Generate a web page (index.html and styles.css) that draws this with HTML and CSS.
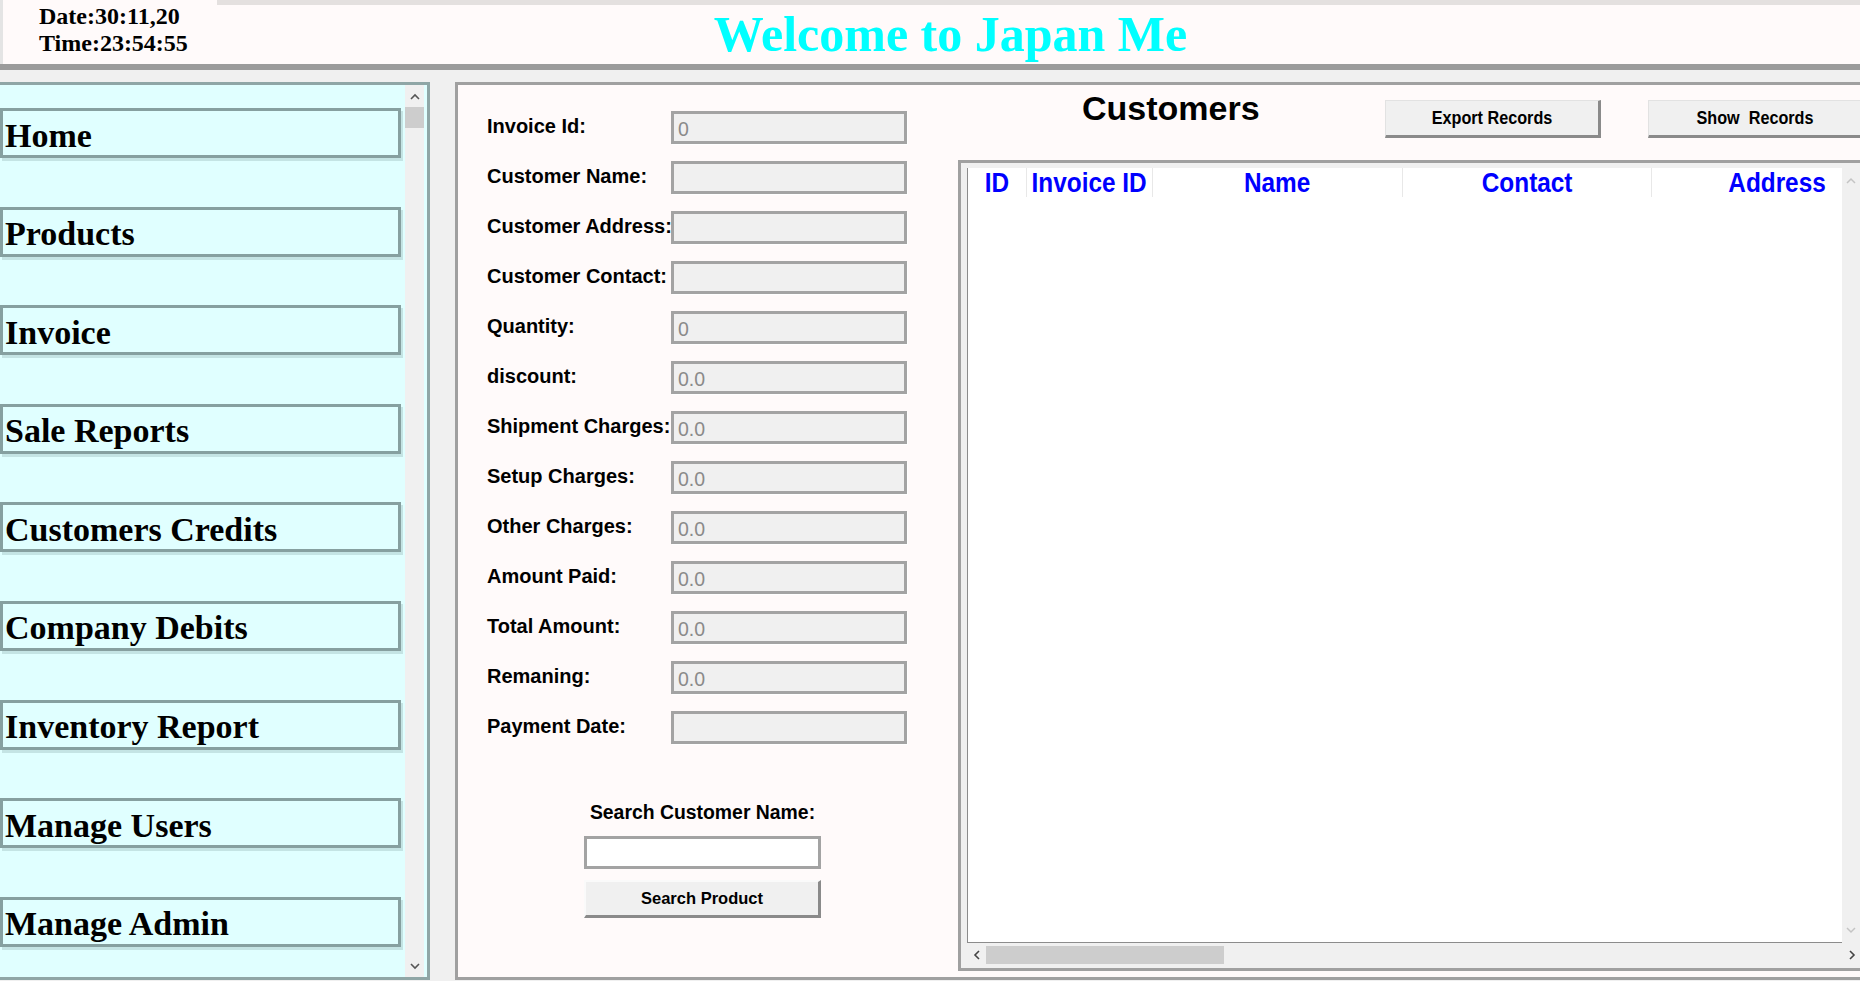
FILE: index.html
```html
<!DOCTYPE html>
<html>
<head>
<meta charset="utf-8">
<title>Japan Me - Customers</title>
<link rel="stylesheet" href="styles.css">
</head>
<body>
<header class="header">
  <div class="clock">
    <div>Date:30:11,20</div>
    <div>Time:23:54:55</div>
  </div>
  <div class="banner">Welcome to Japan Me</div>
</header>
<div class="workspace">
  <nav class="sidebar">
    <div class="navlist">
      <div class="navbtn">Home</div>
      <div class="navbtn">Products</div>
      <div class="navbtn">Invoice</div>
      <div class="navbtn">Sale Reports</div>
      <div class="navbtn">Customers Credits</div>
      <div class="navbtn">Company Debits</div>
      <div class="navbtn">Inventory Report</div>
      <div class="navbtn">Manage Users</div>
      <div class="navbtn">Manage Admin</div>
    </div>
    <div class="sscroll">
      <div class="sarrow"><svg width="10" height="7" viewBox="0 0 10 7"><polyline points="1,6 5,2 9,6" fill="none" stroke="#555" stroke-width="1.6"/></svg></div>
      <div class="sthumb"></div>
      <div class="strack"></div>
      <div class="sarrow"><svg width="10" height="7" viewBox="0 0 10 7"><polyline points="1,1 5,5 9,1" fill="none" stroke="#555" stroke-width="1.6"/></svg></div>
    </div>
  </nav>
  <main class="main">
    <section class="form">
      <div class="row"><label>Invoice Id:</label><input type="text" value="0" readonly></div>
      <div class="row"><label>Customer Name:</label><input type="text" value="" readonly></div>
      <div class="row"><label>Customer Address:</label><input type="text" value="" readonly></div>
      <div class="row"><label>Customer Contact:</label><input type="text" value="" readonly></div>
      <div class="row"><label>Quantity:</label><input type="text" value="0" readonly></div>
      <div class="row"><label>discount:</label><input type="text" value="0.0" readonly></div>
      <div class="row"><label>Shipment Charges:</label><input type="text" value="0.0" readonly></div>
      <div class="row"><label>Setup Charges:</label><input type="text" value="0.0" readonly></div>
      <div class="row"><label>Other Charges:</label><input type="text" value="0.0" readonly></div>
      <div class="row"><label>Amount Paid:</label><input type="text" value="0.0" readonly></div>
      <div class="row"><label>Total Amount:</label><input type="text" value="0.0" readonly></div>
      <div class="row"><label>Remaning:</label><input type="text" value="0.0" readonly></div>
      <div class="row"><label>Payment Date:</label><input type="text" value="" readonly></div>
      <div class="search">
        <div class="search-label">Search Customer Name:</div>
        <input class="search-input" type="text" value="">
        <div class="search-btn">Search Product</div>
      </div>
    </section>
    <section class="records">
      <div class="toolbar">
        <div class="records-title">Customers</div>
        <div class="btn btn-export"><span>Export Records</span></div>
        <div class="btn btn-show"><span>Show&nbsp; Records</span></div>
      </div>
      <div class="tablebox">
        <div class="viewport">
          <div class="thead">
            <div class="th c-id"><span>ID</span></div>
            <div class="th c-inv"><span>Invoice ID</span></div>
            <div class="th c-name"><span>Name</span></div>
            <div class="th c-contact"><span>Contact</span></div>
            <div class="th c-addr"><span>Address</span></div>
          </div>
          <div class="tbody"></div>
        </div>
        <div class="vscroll">
          <svg width="10" height="7" viewBox="0 0 10 7"><polyline points="1,6 5,2 9,6" fill="none" stroke="#c4c4c4" stroke-width="1.5"/></svg>
          <svg width="10" height="7" viewBox="0 0 10 7"><polyline points="1,1 5,5 9,1" fill="none" stroke="#c4c4c4" stroke-width="1.5"/></svg>
        </div>
        <div class="hscroll">
          <svg class="harrow" width="7" height="10" viewBox="0 0 7 10"><polyline points="6,1 2,5 6,9" fill="none" stroke="#444" stroke-width="1.6"/></svg>
          <div class="hthumb"></div>
          <div class="hspace"></div>
          <svg class="harrow" width="7" height="10" viewBox="0 0 7 10"><polyline points="1,1 5,5 1,9" fill="none" stroke="#444" stroke-width="1.6"/></svg>
        </div>
      </div>
    </section>
  </main>
</div>
</body>
</html>
```
FILE: styles.css
```css
* { box-sizing: border-box; }
html, body { margin: 0; padding: 0; }
body {
  width: 1860px;
  height: 981px;
  overflow: hidden;
  background: #f0f0f0;
  font-family: "Liberation Sans", Arial, sans-serif;
  color: #000;
}

/* ---------- header ---------- */
.header {
  display: flex;
  height: 70px;
  background: #fffafa;
  border-bottom: 6px solid #9b9b9b;
}
.clock {
  width: 217px;
  border-left: 3px solid #e4e4e4;
  padding: 3px 0 0 36px;
  font-family: "Liberation Serif", "Times New Roman", serif;
  font-weight: bold;
  font-size: 24px;
  line-height: 27px;
}
.banner {
  flex: 1;
  border-top: 5px solid #e4e0df;
  padding-right: 176px;
  text-align: center;
  font-family: "Liberation Serif", "Times New Roman", serif;
  font-weight: bold;
  font-size: 50px;
  line-height: 59px;
  color: #00ffff;
}

/* ---------- workspace ---------- */
.workspace {
  display: flex;
  align-items: flex-start;
  padding-top: 12px;
}

/* sidebar */
.sidebar {
  width: 430px;
  height: 898px;
  display: flex;
  background: #e0ffff;
  border: 3px solid #8fa6a6;
  border-left: 0;
}
.navlist {
  width: 405px;
  padding-top: 23px;
  display: flex;
  flex-direction: column;
  gap: 48.6px;
}
.navbtn {
  width: 401px;
  height: 50px;
  display: flex;
  align-items: center;
  padding: 5px 0 0 2px;
  border: 3px solid #86a0a0;
  box-shadow: 2px 3px 0 #c4e4e4;
  font-family: "Liberation Serif", "Times New Roman", serif;
  font-weight: bold;
  font-size: 34px;
  white-space: nowrap;
}
.sscroll {
  width: 19px;
  display: flex;
  flex-direction: column;
  background: #f0f0f0;
}
.sarrow {
  height: 22px;
  display: flex;
  align-items: center;
  justify-content: center;
}
.sthumb {
  height: 21px;
  background: #cdcdcd;
}
.strack { flex: 1; }

/* main panel */
.main {
  margin-left: 25px;
  width: 1405px;
  height: 898px;
  display: flex;
  overflow: hidden;
  background: #fffafa;
  border: 3px solid #a0a0a0;
  border-right: 0;
}

/* form */
.form {
  width: 500px;
  flex: none;
  padding: 26px 0 0 29px;
}
.row {
  display: flex;
  align-items: flex-start;
  height: 33px;
  margin-bottom: 17px;
}
.row label {
  width: 184px;
  flex: none;
  font-weight: bold;
  font-size: 20px;
  line-height: 30px;
  white-space: nowrap;
}
.row input {
  width: 236px;
  height: 33px;
  margin: 0;
  padding: 3px 0 0 4px;
  border: 3px solid #a3a3a3;
  border-radius: 0;
  background: #f0f0f0;
  box-shadow: 1px 1px 0 #ffffff;
  font-family: "Liberation Sans", Arial, sans-serif;
  font-size: 19.5px;
  color: #8a8a8a;
  outline: none;
}
.search {
  width: 237px;
  margin: 56px 0 0 97px;
  display: flex;
  flex-direction: column;
  align-items: center;
}
.search-label {
  font-weight: bold;
  font-size: 19.4px;
  line-height: 24px;
  white-space: nowrap;
}
.search-input {
  margin: 12px 0 0;
  width: 237px;
  height: 33px;
  padding: 0 4px;
  border: 3px solid #a3a3a3;
  border-radius: 0;
  background: #fff;
  outline: none;
  font-family: "Liberation Sans", Arial, sans-serif;
  font-size: 18px;
}
.search-btn {
  margin-top: 11px;
  width: 237px;
  height: 38px;
  display: flex;
  align-items: center;
  justify-content: center;
  background: #f0f0f0;
  border-top: 2px solid #fafafa;
  border-left: 2px solid #fafafa;
  border-right: 3px solid #8a8a8a;
  border-bottom: 3px solid #8a8a8a;
  font-weight: bold;
  font-size: 16.5px;
}

/* records */
.records {
  flex: 1;
  display: flex;
  flex-direction: column;
}
.toolbar {
  height: 75px;
  display: flex;
  align-items: flex-start;
}
.records-title {
  margin: 6px 0 0 124px;
  font-weight: bold;
  font-size: 34px;
  line-height: 34px;
  white-space: nowrap;
}
.btn {
  flex: none;
  margin-top: 15px;
  width: 216px;
  height: 38px;
  display: flex;
  align-items: center;
  justify-content: center;
  background: #f0f0f0;
  border-top: 1px solid #e2e2e2;
  border-left: 1px solid #e2e2e2;
  border-right: 3px solid #8a8a8a;
  border-bottom: 3px solid #8a8a8a;
  font-weight: bold;
  font-size: 18px;
  white-space: nowrap;
}
.btn span {
  display: inline-block;
  transform: scaleX(0.9);
}
.btn-export { margin-left: 125px; }
.btn-show { margin-left: 47px; }

/* table */
.tablebox {
  width: 902px;
  height: 811px;
  display: grid;
  grid-template-columns: 875px 18px;
  grid-template-rows: 1fr 24px;
  padding: 5px 0 1px 6px;
  background: #f0f0f0;
  border-top: 3px solid #a0a0a0;
  border-left: 3px solid #a0a0a0;
  border-bottom: 3px solid #a0a0a0;
}
.viewport {
  background: #fff;
  border-left: 1px solid #8c8c8c;
  border-bottom: 1px solid #8c8c8c;
  overflow: hidden;
  display: flex;
  flex-direction: column;
}
.thead {
  display: flex;
  height: 29px;
  flex: none;
}
.th {
  flex: none;
  height: 29px;
  display: flex;
  align-items: center;
  justify-content: center;
  border-right: 1px solid #e8e8e8;
  color: #0000ff;
  font-weight: bold;
  font-size: 28px;
  white-space: nowrap;
}
.th span {
  display: inline-block;
  transform: scaleX(0.87);
}
.c-id { width: 59px; }
.c-inv { width: 126px; }
.c-name { width: 250px; }
.c-contact { width: 249px; }
.c-addr { width: 252px; }
.tbody {
  flex: 1;
  border-right: 1px solid #8c8c8c;
  margin-right: -1px;
}
.vscroll {
  display: flex;
  flex-direction: column;
  justify-content: space-between;
  align-items: center;
  padding: 9px 0 9px;
  background: #f0f0f0;
}
.hscroll {
  grid-column: 1 / 3;
  display: flex;
  align-items: center;
  padding: 0 4px 0 6px;
  background: #f0f0f0;
}
.harrow { flex: none; }
.hthumb {
  margin-left: 6px;
  width: 238px;
  height: 18px;
  background: #cdcdcd;
}
.hspace { flex: 1; }
```
